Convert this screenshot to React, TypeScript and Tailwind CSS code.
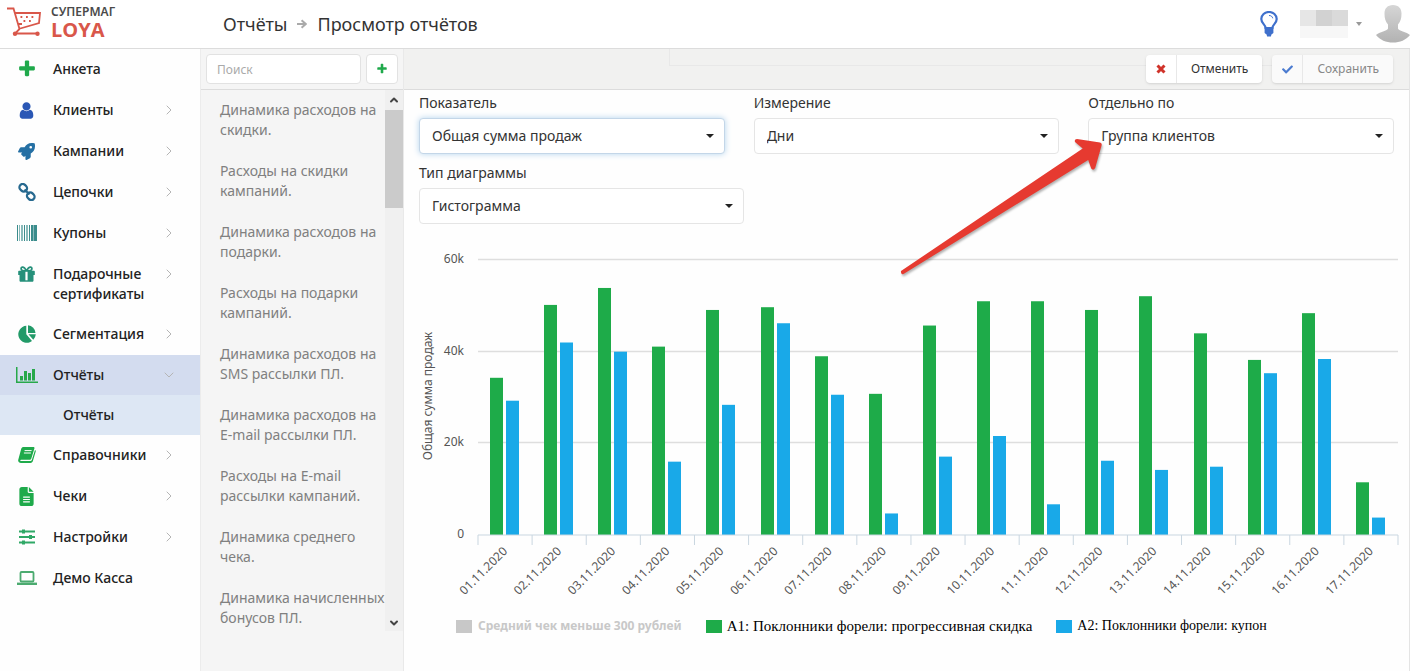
import { useId } from "react"
import type { ReactNode } from "react"
import { FaRocket, FaCheck, FaTimes } from "react-icons/fa"
import { FaFileLines } from "react-icons/fa6"
import { ChevronDown, ChevronRight, ChevronUp } from "lucide-react"

const PlusIcon = ({ className }: { className?: string }) => (
  <svg viewBox="0 0 1792 1792" className={className} fill="currentColor">
    <path d="M1600 736v192q0 40-28 68t-68 28h-416v416q0 40-28 68t-68 28h-192q-40 0-68-28t-28-68v-416h-416q-40 0-68-28t-28-68v-192q0-40 28-68t68-28h416v-416q0-40 28-68t68-28h192q40 0 68 28t28 68v416h416q40 0 68 28t28 68z" />
  </svg>
)

const CrossIcon = () => (
  <svg viewBox="0 0 10 10" className="size-2.5" stroke="#d0332a" strokeWidth="3">
    <path d="M1.500 1.500l7 7M8.500 1.500l-7 7" />
  </svg>
)

const UserIcon = () => (
  <svg viewBox="0 0 1792 1792" className="size-[19px] text-[#2a57b5]" fill="currentColor">
    <path d="M1536 1399q0 109-62.5 187t-150.5 78h-854q-88 0-150.5-78t-62.5-187q0-85 8.5-160.5t31.5-152 58.5-131 94-89 134.5-34.5q131 128 313 128t313-128q76 0 134.5 34.5t94 89 58.5 131 31.5 152 8.5 160.5zm-256-887q0 159-112.5 271.5t-271.5 112.5-271.5-112.5-112.5-271.5 112.5-271.5 271.5-112.5 271.5 112.5 112.5 271.5z" />
  </svg>
)

const ChainIcon = () => (
  <svg viewBox="0 0 18 18" className="size-[18px]" fill="none" stroke="#27698f" strokeWidth="2.300">
    <rect x="1.200" y="1.500" width="8" height="6.500" rx="3.200" transform="rotate(45 5.200 4.800)" />
    <rect x="8.800" y="10" width="8" height="6.500" rx="3.200" transform="rotate(45 12.800 13.200)" />
    <path d="M6.500 6.500l5 5" />
  </svg>
)

const BarcodeIcon = () => (
  <svg viewBox="0 0 20 16" className="h-4 w-5" fill="#3b8c8c">
    <path d="M0 0h1v16H0zM7 0h1v16H7zM12 0h1v16h-1zM14 0h2v16h-2zM17 0h3v16h-3z" />
    <path d="M2 0h1v16H2zM4 0h2v16H4zM9 0h2v16H9zM16 0h1v16h-1z" opacity="0.6" />
  </svg>
)

const GiftIcon = () => (
  <svg viewBox="0 0 17 16" className="h-4 w-[17px]">
    <path d="M8.500 5C7 2 5.500 1 4.300 1.200c-1.600.3-1.700 2.800.2 3.300 1 .3 2.500.4 4 .5zM8.500 5c1.500-3 3-4 4.200-3.800 1.600.3 1.700 2.800-.2 3.300-1 .3-2.500.4-4 .5z" fill="none" stroke="#25907a" strokeWidth="1.800" />
    <path d="M1 4.800h15c.5 0 .8.300.8.700V9H0.200V5.500c0-.4.300-.7.800-.7zM1.500 9h14v5.500c0 .8-.5 1.300-1.300 1.300H2.800c-.8 0-1.300-.5-1.300-1.300z" fill="#25907a" />
    <path d="M7.400 5.800h2.200v8.500H7.400z" fill="#fff" />
  </svg>
)

const PieIcon = () => (
  <svg viewBox="0 0 18 18" className="size-[18px]" fill="#229a68">
    <path d="M8.300 9.300l5.700 6.700A8.500 8.500 0 1 1 8.300.8z" />
    <path d="M10 .3a8 8 0 0 1 7.500 7.600H10z" />
    <path d="M10.500 9.300H17.800a9 9 0 0 1-2.500 5.500z" />
  </svg>
)

const BarsIcon = () => (
  <svg viewBox="0 0 22 16" className="h-4 w-[22px]" fill="#27a84a">
    <path d="M0 0h1.500v14.500H22V16H0zM4 9h3v4.500H4zM8 4h3v9.500H8zM12 6h3v7.500h-3zM16 2h3v11.500h-3z" />
  </svg>
)

const BookIcon = () => (
  <svg viewBox="0 0 18 16" className="h-4 w-[18px]">
    <path
      d="M5.500 0h9.800c.9 0 1.400.6 1.100 1.500l-3 9.800c-.3 1-1 1.500-2 1.500H3c-1 0-1 1.300.3 1.300h9.100c.7 0 1.200-.4 1.400-1.100L17 3c.8.4.9 1 .7 1.600l-2.800 9.400c-.3 1.100-1.200 1.900-2.300 1.900H3c-1.700 0-3.200-1.500-2.800-3L3.300 1.600C3.700.6 4.500 0 5.500 0z"
      fill="#1faa4b"
    />
    <path d="M6.600 3.600h7M5.900 6h7" stroke="#fff" strokeWidth="1" />
  </svg>
)

const SlidersIcon = () => (
  <svg viewBox="0 0 18 16" className="h-4 w-[18px]" fill="#2fa866">
    <path d="M1 1.500h16V3.500H1zM1 7h16V9H1zM1 12.500h16v2H1z" />
    <path d="M4 .5h3v4H4zM11 6h3v4h-3zM4 11.500h3v4H4z" />
  </svg>
)

const LaptopIcon = () => (
  <svg viewBox="0 0 20 14" className="h-3.5 w-5" fill="none" stroke="#4cab70">
    <rect x="3.500" y="1" width="13" height="9.500" rx="1" strokeWidth="1.800" />
    <path d="M0 12.800h20" strokeWidth="2.400" />
  </svg>
)

const Logo = () => (
  <svg viewBox="0 0 36 30" className="h-[30px] w-9" fill="none" stroke="#d9574a" strokeWidth="1.800">
    <path d="M0 1.500h6.500l6 20.500M8 6h25l-1 10-20.500 6M12.500 22l-4.500 4.500h24M11 17h4" />
    <circle cx="8" cy="26.800" r="2.200" fill="#d9574a" stroke="none" />
    <circle cx="30.500" cy="26.800" r="2.200" fill="#d9574a" stroke="none" />
    <path d="M13.500 10h1.800M19 10h1.800M24.500 10h1.800M16.500 14h1.800M22 14h1.800" strokeWidth="1.800" />
  </svg>
)

const BulbIcon = () => (
  <svg viewBox="0 0 18 26" className="h-[26px] w-[18px]">
    <path
      d="M5.600 17c0-3.500-4.300-4.500-4.300-9A7.700 7 0 0 1 16.700 8c0 4.500-4.300 5.500-4.300 9z"
      fill="#fff"
      stroke="#3f70cc"
      strokeWidth="2.200"
    />
    <path d="M9 4.500c2 0 3.500 1 3.700 2.800" fill="none" stroke="#3f70cc" />
    <path d="M4.600 16h8.800v6l-2 1.500-.5 2H7.100l-.5-2-2-1.500z" fill="#3f70cc" />
  </svg>
)

const Avatar = () => (
  <svg viewBox="0 0 34 38" className="h-[38px] w-[34px]">
    <defs>
      <linearGradient id="avatar" x1="0" y1="0" x2="0" y2="1">
        <stop offset="0" stopColor="#d6d6d6" />
        <stop offset="1" stopColor="#b2b2b2" />
      </linearGradient>
    </defs>
    <path
      d="M17 0c5.500 0 8.500 3.500 8.500 8.500 0 5-1 8-3.500 11v4c0 2 9 3.500 12 6.500-4 5-10 7.500-17 7.500S4 35 0 30c3-3 12-4.500 12-6.500v-4c-2.500-3-3.500-6-3.500-11C8.500 3.500 11.500 0 17 0z"
      fill="url(#avatar)"
    />
  </svg>
)

interface NavItem {
  label: string
  icon: ReactNode
  arrow?: boolean
  active?: boolean
}

const navItems: NavItem[] = [
  { label: "Анкета", icon: <PlusIcon className="size-5 text-[#1fa94b]" /> },
  { label: "Клиенты", icon: <UserIcon />, arrow: true },
  { label: "Кампании", icon: <FaRocket className="size-[17px] text-[#2570a4]" />, arrow: true },
  { label: "Цепочки", icon: <ChainIcon />, arrow: true },
  { label: "Купоны", icon: <BarcodeIcon />, arrow: true },
  { label: "Подарочные сертификаты", icon: <GiftIcon />, arrow: true },
  { label: "Сегментация", icon: <PieIcon />, arrow: true },
  { label: "Отчёты", icon: <BarsIcon />, arrow: true, active: true },
  { label: "Справочники", icon: <BookIcon />, arrow: true },
  { label: "Чеки", icon: <FaFileLines className="size-[19px] text-[#1faa4b]" />, arrow: true },
  { label: "Настройки", icon: <SlidersIcon />, arrow: true },
  { label: "Демо Касса", icon: <LaptopIcon /> },
]

const reports = [
  "Динамика расходов на\nскидки.",
  "Расходы на скидки\nкампаний.",
  "Динамика расходов на\nподарки.",
  "Расходы на подарки\nкампаний.",
  "Динамика расходов на\nSMS рассылки ПЛ.",
  "Динамика расходов на\nE-mail рассылки ПЛ.",
  "Расходы на E-mail\nрассылки кампаний.",
  "Динамика среднего\nчека.",
  "Динамика начисленных\nбонусов ПЛ.",
]

// sales by day, thousands: [progressive discount, coupon]
const sales = [
  [34.3, 29.3],
  [50.2, 42],
  [53.9, 40],
  [41.1, 16],
  [49.1, 28.4],
  [49.7, 46.2],
  [39, 30.6],
  [30.8, 4.7],
  [45.7, 17.1],
  [51, 21.6],
  [51, 6.7],
  [49.1, 16.2],
  [52.1, 14.2],
  [44, 14.9],
  [38.2, 35.3],
  [48.4, 38.4],
  [11.5, 3.8],
]

function Header() {
  return (
    <header className="flex h-[49px] items-center border-b border-[#dcdcdc] bg-white">
      <a href="#" className="flex w-[223px] items-center gap-2 pb-1 pl-[7px]">
        <Logo />
        <span className="flex flex-col">
          <span className="text-xs leading-4 font-semibold text-[#4a4a4a]">СУПЕРМАГ</span>
          <span className="font-['Open_Sans',sans-serif] text-xl leading-5 font-bold text-[#d9574a]">LOYA</span>
        </span>
      </a>
      <h1 className="flex items-center gap-2.5 text-lg text-[#333]">
        Отчёты
        <svg viewBox="0 0 12 12" className="size-2.5" fill="none" stroke="#aaa" strokeWidth="2.400">
          <path d="M0 6h10M5.500 1.500l5 4.500-5 4.500" />
        </svg>
        Просмотр отчётов
      </h1>
      <div className="ml-auto flex items-center">
        <button type="button" aria-label="Подсказка">
          <BulbIcon />
        </button>
        <button type="button" aria-label="Профиль" className="ml-[22px] flex items-center gap-1">
          <span className="grid grid-cols-3">
            <span className="size-4 bg-[#e6e6e6]" />
            <span className="size-4 bg-[#d2d2d2]" />
            <span className="size-4 bg-[#dadada]" />
            <span className="col-span-3 h-3 bg-[#f7f7f7]" />
          </span>
          <svg viewBox="0 0 6 4" className="ml-1 h-1 w-1.5" fill="#999">
            <path d="M0 0h6L3 4z" />
          </svg>
        </button>
        <span className="ml-3.5">
          <Avatar />
        </span>
      </div>
    </header>
  )
}

function Sidebar() {
  return (
    <nav className="w-[201px] shrink-0 border-r border-[#ececec] bg-[#fefefe]">
      <ul>
        {navItems.map((item) => (
          <li key={item.label}>
            <a
              href="#"
              className={`flex py-2.5 text-sm leading-5 font-medium text-[#222] ${
                item.active ? "min-h-10 bg-[#d3dcef]" : "min-h-[41px]"
              }`}
            >
              <span className="flex h-5 w-[53px] shrink-0 items-center justify-center">{item.icon}</span>
              <span className="w-[100px]">{item.label}</span>
              {item.arrow && (
                <span className="ml-2 flex h-5 items-center text-[#b5b5b5]">
                  {item.active ? <ChevronDown className="size-4" strokeWidth={1.5} /> : <ChevronRight className="size-4" strokeWidth={1.5} />}
                </span>
              )}
            </a>
            {item.active && (
              <a href="#" className="block bg-[#dde7f4] py-2.5 pl-[63px] text-sm leading-5 font-medium text-[#222]">
                Отчёты
              </a>
            )}
          </li>
        ))}
      </ul>
    </nav>
  )
}

function ReportList() {
  return (
    <aside className="flex w-[203px] shrink-0 flex-col border-r border-[#e9e9e9] bg-[#f5f5f5]">
      <div className="flex h-[41px] items-center gap-[5px] border-b border-[#dcdcdc] px-[5px]">
        <input
          type="search"
          aria-label="Поиск"
          placeholder="Поиск"
          className="h-[30px] min-w-0 flex-1 rounded border border-[#e2e2e2] bg-white px-2.5 text-xs placeholder:text-[#aaa]"
        />
        <button
          type="button"
          aria-label="Добавить"
          className="flex h-[30px] w-8 items-center justify-center rounded border border-[#e2e2e2] bg-white"
        >
          <PlusIcon className="size-3 text-[#1fa94b]" />
        </button>
      </div>
      <div className="flex h-[541px]">
        <ul className="flex min-w-0 flex-1 flex-col gap-[21px] pt-2.5 pl-[19px] text-sm leading-5 whitespace-pre text-[#808080]">
          {reports.map((report) => (
            <li key={report}>
              <a href="#">{report}</a>
            </li>
          ))}
        </ul>
        <div className="flex w-[18px] flex-col items-center bg-[#f0f0f0] text-[#444]">
          <ChevronUp className="my-1 size-3" strokeWidth={4} />
          <div className="h-[98px] w-full bg-[#cbcbcb]" />
          <ChevronDown className="mt-auto mb-0.5 size-3" strokeWidth={4} />
        </div>
      </div>
    </aside>
  )
}

interface FieldProps {
  label: string
  value: string
  focused?: boolean
  className?: string
  children?: ReactNode
}

function Field({ label, value, focused, className = "", children }: FieldProps) {
  const id = useId()
  return (
    <div className={`relative ${className}`}>
      <label htmlFor={id} className="mb-[5px] block text-sm leading-5 text-[#333]">
        {label}
      </label>
      <div className="relative">
        <select
          id={id}
          className={`h-9 w-full appearance-none rounded border bg-white px-3 text-sm text-[#333] outline-none ${
            focused ? "border-[#c3d6e8] shadow-[0_0_6px_#b5d5ee]" : "border-[#e5e5e5]"
          }`}
        >
          <option>{value}</option>
        </select>
        <svg viewBox="0 0 8 4" className="pointer-events-none absolute top-4 right-[11px] h-1 w-2" fill="#222">
          <path d="M0 0h8L4 4z" />
        </svg>
      </div>
      {children}
    </div>
  )
}

function PointerArrow() {
  return (
    <svg
      viewBox="0 0 210 145"
      className="pointer-events-none absolute top-10 -left-[190px] h-[145px] w-[210px] drop-shadow-[1px_2px_1px_rgba(0,0,0,0.3)]"
    >
      <path
        d="M3 138L184.700 15.500 177 9q-1-3 2-3l23 3.500q2 .5 1.700 2.500l-6.500 23q-2 3-4 .5l-3-8.500L5.500 141q-3 1-2.500-3z"
        fill="#e63a30"
      />
    </svg>
  )
}

const PLOT_LEFT = 74
const PLOT_RIGHT = 994
const BASE = 311
const PER_K = 275 / 60
const STEP = (PLOT_RIGHT - PLOT_LEFT) / sales.length

function SalesChart() {
  return (
    <svg viewBox="0 0 1005 388" className="block w-full" role="img" aria-label="Общая сумма продаж">
      {[0, 20, 40, 60].map((tick) => {
        const y = Math.round(BASE - tick * PER_K)
        return (
          <g key={tick}>
            {tick > 0 && <path d={`M${PLOT_LEFT} ${y - 0.5}H${PLOT_RIGHT}`} stroke="#dedede" strokeWidth="1.500" />}
            <text x="60" y={y + 3} textAnchor="end" fontSize="12" fill="#555">
              {tick ? `${tick}k` : "0"}
            </text>
          </g>
        )
      })}
      <text transform="translate(28 172) rotate(-90)" textAnchor="middle" fontSize="12" fill="#555">
        Общая сумма продаж
      </text>
      {sales.map(([green, blue], i) => {
        const x = PLOT_LEFT + i * STEP
        const left = Math.round(x + 12)
        return (
          <g key={i}>
            <rect x={left} y={BASE - green * PER_K} width="13" height={green * PER_K} fill="#1eab49" />
            <rect x={left + 16} y={BASE - blue * PER_K} width="13" height={blue * PER_K} fill="#19a9e8" />
            <path d={`M${x} ${BASE}v10`} stroke="#c9d6e0" />
            <text transform={`translate(${x + 30} ${BASE + 17}) rotate(-45)`} textAnchor="end" fontSize="12" fill="#555">
              {`${String(i + 1).padStart(2, "0")}.11.2020`}
            </text>
          </g>
        )
      })}
      <path d={`M${PLOT_LEFT} ${BASE}H${PLOT_RIGHT}v10`} fill="none" stroke="#c9d6e0" />
    </svg>
  )
}

function Legend() {
  return (
    <div className="flex h-7 items-center gap-6 pl-[52px] whitespace-nowrap">
      <button type="button" className="flex items-center gap-1.5 text-xs font-bold text-[#c8c8c8]">
        <span className="h-[13px] w-4 bg-[#c8c8c8]" />
        Средний чек меньше 300 рублей
      </button>
      <button
        type="button"
        className="flex items-center gap-[5px] font-['Liberation_Serif',serif] text-[15px] text-black"
      >
        <span className="h-[13px] w-4 bg-[#1eab49]" />
        А1: Поклонники форели: прогрессивная скидка
      </button>
      <button type="button" className="flex items-center gap-[5px] font-['Liberation_Serif',serif] text-sm text-black">
        <span className="h-[13px] w-4 bg-[#19a9e8]" />
        А2: Поклонники форели: купон
      </button>
    </div>
  )
}

export default function App() {
  return (
    <div className="flex min-h-screen flex-col bg-[#fefefe] font-['Noto_Sans',sans-serif]">
      <Header />
      <div className="flex flex-1">
        <Sidebar />
        <ReportList />
        <main className="min-w-0 flex-1 border-r border-[#e4e4e4]">
          {/* Toolbar */}
          <div className="relative flex h-[41px] items-center justify-end gap-2.5 border-b border-[#dcdcdc] bg-[#f1f1f0] pr-4 text-xs">
            <div className="absolute top-0 right-4 h-[17px] w-[72%] border-b border-l border-[#e8e8e8]" />
            <button type="button" className="relative flex h-7 items-stretch rounded bg-white text-[#333] shadow-sm">
              <span className="flex w-[31px] items-center justify-center border-r border-[#e8e8e8]">
                <CrossIcon />
              </span>
              <span className="flex items-center px-3.5">Отменить</span>
            </button>
            <button type="button" className="relative flex h-7 items-stretch rounded bg-[#fafafa] text-[#888] shadow-sm">
              <span className="flex w-[31px] items-center justify-center border-r border-[#e8e8e8]">
                <FaCheck className="size-[11px] text-[#4b7bd0]" />
              </span>
              <span className="flex items-center px-3.5">Сохранить</span>
            </button>
          </div>

          {/* Report settings */}
          <form className="pt-[3px] pr-[15px] pl-[15px]">
            <div className="grid grid-cols-3 gap-[29px]">
              <Field label="Показатель" value="Общая сумма продаж" focused />
              <Field label="Измерение" value="Дни" />
              <Field label="Отдельно по" value="Группа клиентов">
                <PointerArrow />
              </Field>
            </div>
            <Field label="Тип диаграммы" value="Гистограмма" className="mt-[9px] w-1/3" />
          </form>

          <SalesChart />
          <Legend />
        </main>
      </div>
    </div>
  )
}
